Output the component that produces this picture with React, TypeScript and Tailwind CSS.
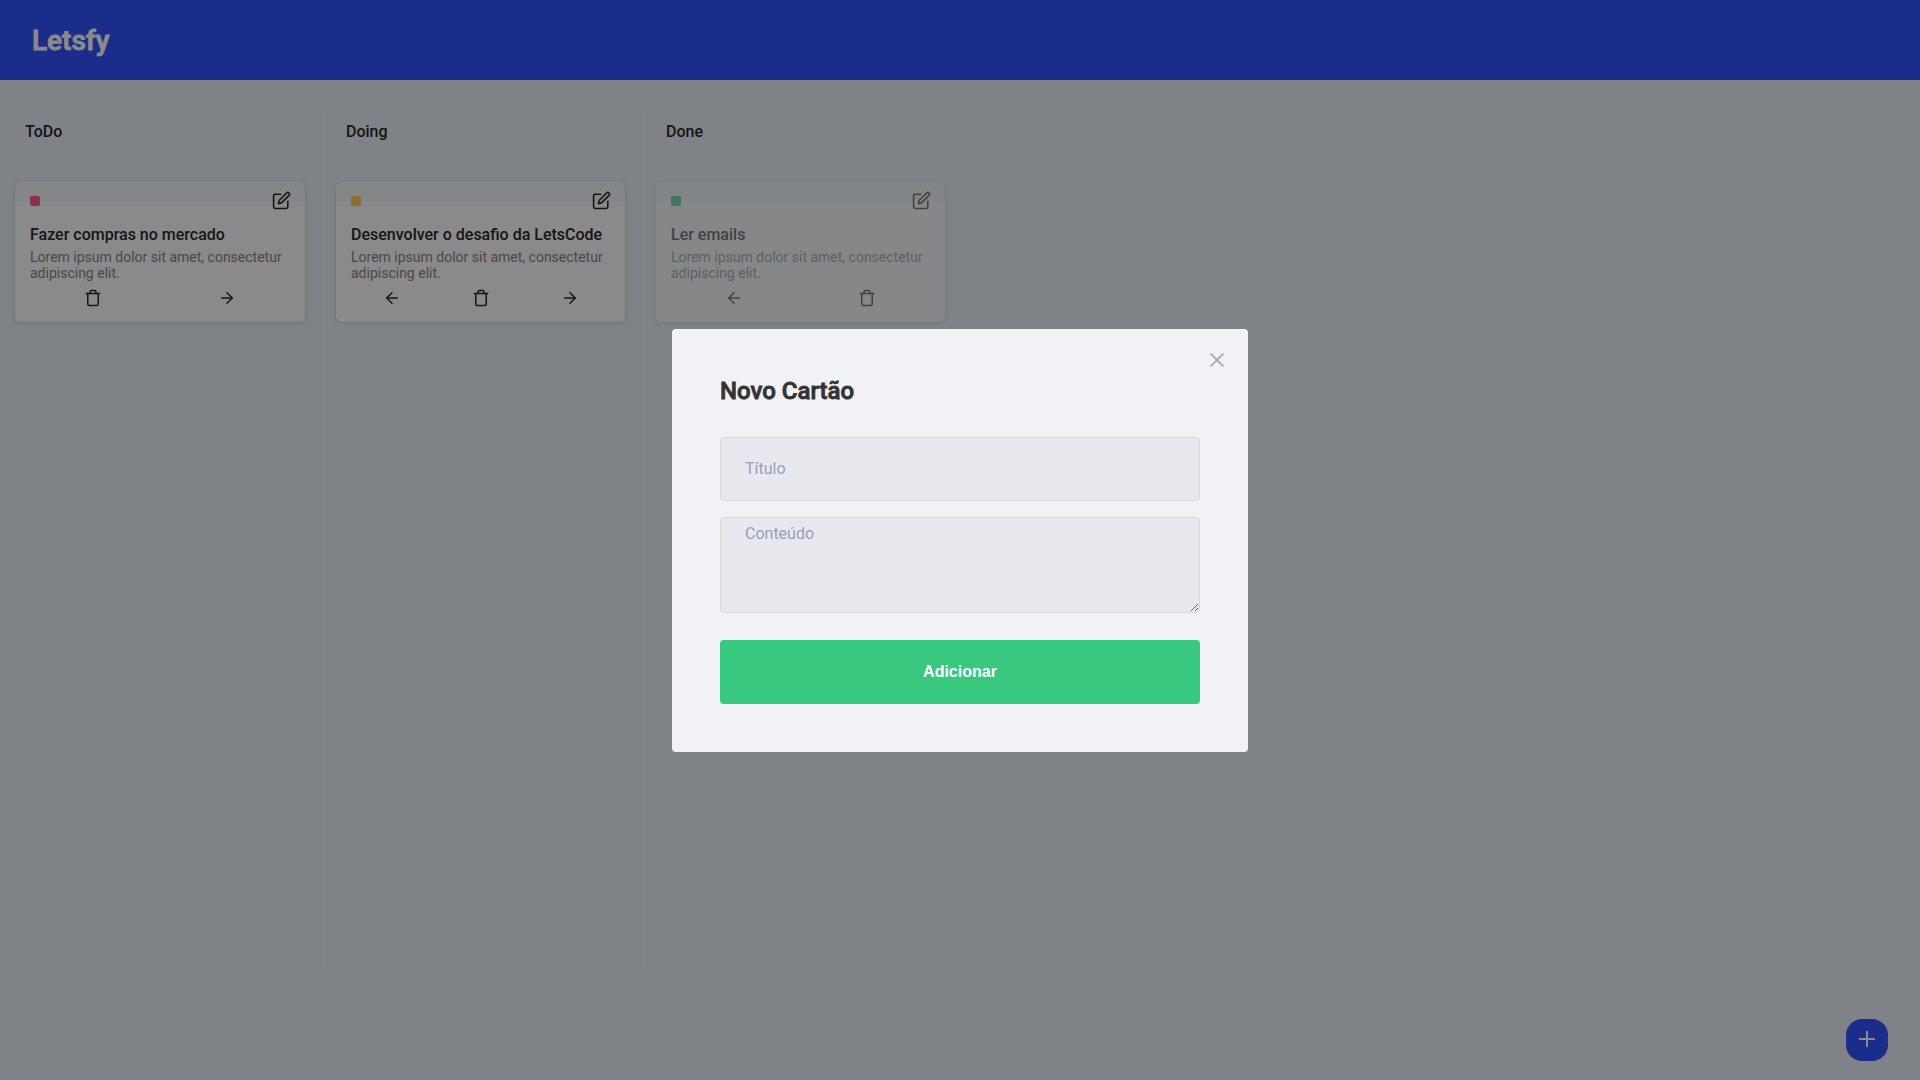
import { FiArrowLeft, FiArrowRight, FiEdit, FiTrash } from "react-icons/fi";

type Card = {
  title: string;
  content: string;
  dot: string;
};

type Column = {
  name: string;
  done?: boolean;
  back?: boolean;
  forward?: boolean;
  cards: Card[];
};

const lorem = "Lorem ipsum dolor sit amet, consectetur adipiscing elit.";

const columns: Column[] = [
  {
    name: "ToDo",
    forward: true,
    cards: [{ title: "Fazer compras no mercado", content: lorem, dot: "bg-[#ff5c96]" }],
  },
  {
    name: "Doing",
    back: true,
    forward: true,
    cards: [{ title: "Desenvolver o desafio da LetsCode", content: lorem, dot: "bg-[#ffcd5c]" }],
  },
  {
    name: "Done",
    done: true,
    back: true,
    cards: [{ title: "Ler emails", content: lorem, dot: "bg-[#33cc80]" }],
  },
];

function CardView({ card, column }: { card: Card; column: Column }) {
  return (
    <article className="h-[140px] rounded-[5px] border-t-[20px] border-[#e6ecf5]/40 bg-white px-[15px] shadow-[0_1px_4px_0_rgba(192,208,230,0.8)]">
      <header className="-mt-3 flex h-[22px] items-center justify-between">
        <span className={`size-2.5 rounded-xs ${card.dot}`} />
        <button aria-label="Editar" className="-mr-[0.5px] pb-px">
          <FiEdit size={19} />
        </button>
      </header>
      <h3 className="mt-[13px] text-base leading-5 font-medium whitespace-nowrap">{card.title}</h3>
      <p className="mt-1 text-sm leading-4 text-[#858585]">{card.content}</p>
      <footer className="-mx-1 mt-2 flex items-center justify-around">
        {column.back && (
          <button aria-label="Voltar">
            <FiArrowLeft size={18} />
          </button>
        )}
        <button aria-label="Excluir">
          <FiTrash size={18} />
        </button>
        {column.forward && (
          <button aria-label="Avançar">
            <FiArrowRight size={18} />
          </button>
        )}
      </footer>
    </article>
  );
}

function ColumnView({ column, first }: { column: Column; first: boolean }) {
  return (
    <section
      className={`h-full w-80 shrink-0 px-[15px] ${first ? "" : "border-l border-black/5"}`}
    >
      <h2 className="flex h-[42px] items-center px-2.5 pt-0.5 text-base font-medium">{column.name}</h2>
      <div className={`mt-[30px] ${column.done ? "opacity-60" : ""}`}>
        {column.cards.map((card) => (
          <CardView key={card.title} card={card} column={column} />
        ))}
      </div>
    </section>
  );
}

function NewCardModal() {
  return (
    <div className="fixed inset-0 flex items-center justify-center bg-black/46">
      <div className="relative w-[576px] rounded-[4px] bg-[#f0f2f5] p-12">
        <button aria-label="Fechar" className="absolute top-6 right-6 text-[#a9abb2]">
          <svg width="14" height="14" viewBox="0 0 14 14" fill="none" stroke="currentColor" strokeWidth="1.9">
            <path d="M.6 .6l12.8 12.8M13.4 .6l-12.8 12.8" />
          </svg>
        </button>
        <h2 className="mb-8 text-2xl leading-7 font-medium text-[#333] [-webkit-text-stroke:0.8px_#333]">
          Novo Cartão
        </h2>
        <input
          placeholder="Título"
          className="block h-16 w-full rounded-[4px] border border-[#d7d7d7] bg-[#e7e9ee] px-6 text-base placeholder:text-[#999ebc]"
        />
        <textarea
          placeholder="Conteúdo"
          className="mt-4 block h-24 w-full rounded-[4px] border border-[#d7d7d7] bg-[#e7e9ee] px-6 py-1.5 text-base leading-[19px] placeholder:text-[#999ebc]"
        />
        <button className="mt-[27px] block h-16 w-full rounded-[4px] bg-[#38c97f] font-['Liberation_Sans',sans-serif] text-base font-semibold text-white">
          Adicionar
        </button>
      </div>
    </div>
  );
}

export default function App() {
  return (
    <div className="flex h-screen flex-col overflow-hidden bg-[#ebf2f9] font-['Roboto',sans-serif] text-[#292929] antialiased">
      <header className="flex h-20 shrink-0 items-center bg-[#3253ff] px-8 pt-0.5">
        <h1 className="text-[28px] font-medium text-white [-webkit-text-stroke:0.9px_#fff]">Letsfy</h1>
      </header>
      <main className="mt-[30px] flex h-[860px]">
        {columns.map((column, i) => (
          <ColumnView key={column.name} column={column} first={i === 0} />
        ))}
      </main>
      <button
        aria-label="Novo cartão"
        className="fixed right-8 bottom-[19px] flex size-[42px] items-center justify-center rounded-2xl bg-[#3253ff] pb-0.5 text-white"
      >
        <svg width="16" height="16" viewBox="0 0 16 16" fill="none" stroke="currentColor" strokeWidth="2">
          <path d="M8 0v16M0 8h16" />
        </svg>
      </button>
      <NewCardModal />
    </div>
  );
}
